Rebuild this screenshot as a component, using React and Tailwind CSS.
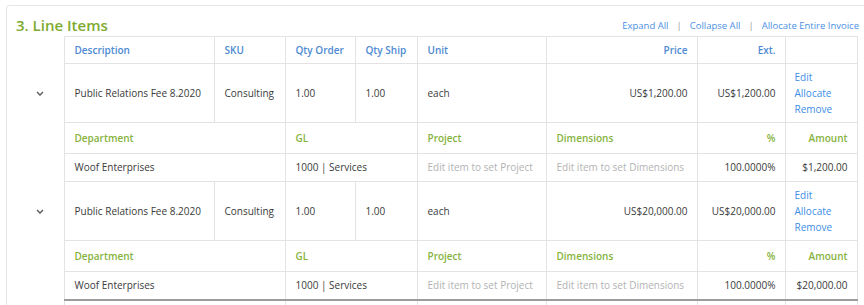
import React from "react";

const B = "border border-[#e3e3e3]";
const td = `${B} px-[10px] align-middle`;
const tdR = `${B} pr-[9px] pl-[6px] text-right align-middle`;

function Chevron() {
  return (
    <svg width="8" height="5" viewBox="0 0 8 5" className="ml-[29px] block">
      <path d="M1 1 L4 4 L7 1" fill="none" stroke="#555" strokeWidth="1.3" />
    </svg>
  );
}

function Item({ price, amount }) {
  return (
    <>
      <tr className="h-[59px] text-[#3a3a3a]">
        <td className="border-0 align-middle">
          <Chevron />
        </td>
        <td className={td}>Public Relations Fee 8.2020</td>
        <td className={td}>Consulting</td>
        <td className={td}>1.00</td>
        <td className={td}>1.00</td>
        <td className={td}>each</td>
        <td className={tdR}>{price}</td>
        <td className={tdR}>{price}</td>
        <td className={`${B} pl-[9px] align-middle text-[#3d8ee6] leading-[16px]`}>
          <div>Edit</div>
          <div>Allocate</div>
          <div>Remove</div>
        </td>
      </tr>
      <tr className="h-[31px] font-semibold text-[#86b340]">
        <td className="border-0" />
        <td className={td} colSpan={2}>Department</td>
        <td className={td} colSpan={2}>GL</td>
        <td className={td}>Project</td>
        <td className={td}>Dimensions</td>
        <td className={tdR}>%</td>
        <td className={tdR}>Amount</td>
      </tr>
      <tr className="h-[28px] text-[#3a3a3a]">
        <td className="border-0" />
        <td className={td} colSpan={2}>Woof Enterprises</td>
        <td className={td} colSpan={2}>1000 | Services</td>
        <td className={`${td} text-[#b3b3b3]`}>Edit item to set Project</td>
        <td className={`${td} text-[#b3b3b3]`}>Edit item to set Dimensions</td>
        <td className={tdR}>100.0000%</td>
        <td className={tdR}>{amount}</td>
      </tr>
    </>
  );
}

function Cols() {
  return (
    <colgroup>
      <col className="w-[57px]" />
      <col className="w-[150px]" />
      <col className="w-[71px]" />
      <col className="w-[70px]" />
      <col className="w-[62px]" />
      <col className="w-[129px]" />
      <col className="w-[151px]" />
      <col className="w-[88px]" />
      <col className="w-[72px]" />
    </colgroup>
  );
}

export default function App() {
  const dark = `${B} border-t-2 border-t-[#9c9c9c]`;
  return (
    <div className="w-[864px] h-[305px] overflow-hidden bg-white pl-[6px] pt-[5px] font-['Open_Sans',sans-serif]">
      <div className="w-[900px] h-[400px] border border-[#e6e6e6] rounded-[3px] bg-white">
        <div className="w-[852px] pl-[9px] pt-[9px] flex justify-between items-end">
          <div className="text-[15px] leading-[20px] font-semibold text-[#7dab2f]">3. Line Items</div>
          <div className="flex items-center text-[9.5px] leading-[14px] pb-[2px] text-[#4a90e2]">
            <span>Expand All</span>
            <span className="mx-[8px] text-[#9a9a9a]">|</span>
            <span>Collapse All</span>
            <span className="mx-[8px] text-[#9a9a9a]">|</span>
            <span>Allocate Entire Invoice</span>
          </div>
        </div>
        <table className="mt-[1px] border-collapse table-fixed w-[850px] text-[10px]">
          <Cols />
          <tbody>
            <tr className="h-[27px] font-semibold text-[#4d8ad3]">
              <td className="border-0" />
              <td className={td}>Description</td>
              <td className={td}>SKU</td>
              <td className={td}>Qty Order</td>
              <td className={td}>Qty Ship</td>
              <td className={td}>Unit</td>
              <td className={tdR}>Price</td>
              <td className={tdR}>Ext.</td>
              <td className={td} />
            </tr>
            <Item price="US$1,200.00" amount="$1,200.00" />
          </tbody>
        </table>
        <table className="border-collapse table-fixed w-[850px] text-[10px] -mt-[1px]">
          <Cols />
          <tbody>
            <Item price="US$20,000.00" amount="$20,000.00" />
            <tr className="h-[24px]">
              <td className="border-0" />
              <td className={dark} colSpan={2} />
              <td className={dark} colSpan={2} />
              <td className={dark} />
              <td className={dark} />
              <td className={dark} />
              <td className={dark} />
            </tr>
          </tbody>
        </table>
      </div>
    </div>
  );
}
